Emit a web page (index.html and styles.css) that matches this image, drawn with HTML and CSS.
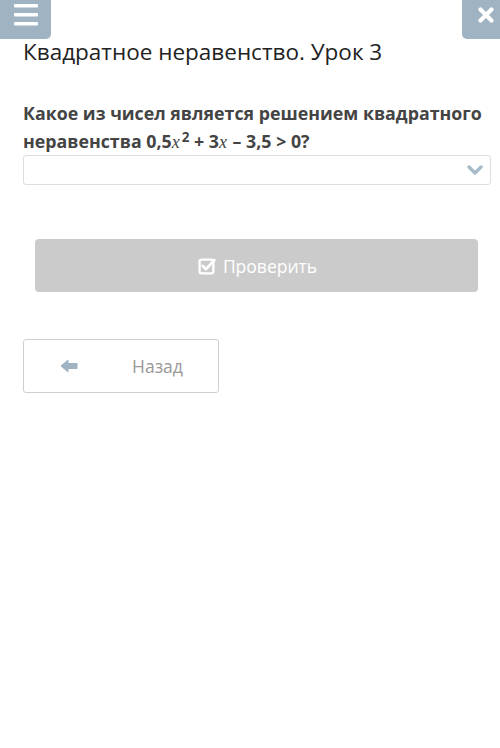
FILE: index.html
```html
<!DOCTYPE html>
<html lang="ru">
<head>
<meta charset="utf-8">
<title>Квадратное неравенство. Урок 3</title>
<link rel="stylesheet" href="styles.css">
</head>
<body>
<div class="topbar">
  <button class="corner-btn menu-btn" aria-label="Меню">
    <svg width="24" height="22" viewBox="0 0 24 22"><rect x="0" y="0" width="24" height="3.4" rx="1" fill="#fff"/><rect x="0" y="9" width="24" height="3.4" rx="1" fill="#fff"/><rect x="0" y="18" width="24" height="3.4" rx="1" fill="#fff"/></svg>
  </button>
  <button class="corner-btn close-btn" aria-label="Закрыть">
    <svg width="16" height="16" viewBox="0 0 16 16"><path d="M2.5 2.5 L13.5 13.5 M13.5 2.5 L2.5 13.5" stroke="#fff" stroke-width="4.2" stroke-linecap="round"/></svg>
  </button>
</div>
<main class="content">
  <h1 class="title">Квадратное неравенство. Урок 3</h1>
  <p class="question">Какое из чисел является решением квадратного неравенства 0,5<span class="var">x</span><sup>2</sup>&nbsp;+ 3<span class="var">x</span> – 3,5 &gt; 0?</p>
  <div class="select">
    <svg class="chev" width="16" height="12" viewBox="0 0 16 12"><path d="M2 3 L8 9 L14 3" fill="none" stroke="#a7bccb" stroke-width="3.4" stroke-linecap="round" stroke-linejoin="round"/></svg>
  </div>
  <div class="check-row">
    <button class="check-btn">
      <svg width="18" height="18" viewBox="0 0 17 17"><rect x="1.5" y="2.5" width="13" height="13" rx="2" fill="none" stroke="#fff" stroke-width="2.2"/><path d="M4.5 8.5 L7.5 11.5 L15.5 3" fill="none" stroke="#fff" stroke-width="2.6" stroke-linecap="round" stroke-linejoin="round"/></svg>
      <span>Проверить</span>
    </button>
  </div>
  <button class="back-btn">
    <svg class="arrow" width="18" height="14" viewBox="0 0 18 14"><path d="M1 7 L8 1 L8 4.5 L17 4.5 L17 9.5 L8 9.5 L8 13 Z" fill="#9fb3c3" stroke="#9fb3c3" stroke-width="1" stroke-linejoin="round"/></svg>
    <span>Назад</span>
  </button>
</main>
</body>
</html>
```

FILE: styles.css
```css
* { box-sizing: border-box; }

body {
  margin: 0;
  background: #fff;
  font-family: "Open Sans", "Liberation Sans", sans-serif;
  color: #222;
}

.topbar {
  display: flex;
  justify-content: space-between;
  height: 0;
}

.corner-btn {
  border: none;
  padding: 0;
  height: 39px;
  background: #a0b3c3;
  display: flex;
}

.menu-btn {
  width: 51px;
  border-radius: 0 0 5px 0;
  align-items: flex-start;
  justify-content: center;
  padding-top: 4px;
  padding-left: 1px;
}

.close-btn {
  width: 38px;
  border-radius: 0 0 0 5px;
  align-items: flex-start;
  justify-content: flex-end;
  padding-top: 7px;
  padding-right: 6px;
}

.content {
  padding: 37px 9px 0 23px;
}

.title {
  margin: 0;
  font-size: 22.5px;
  font-weight: 400;
  line-height: 30px;
  color: #222;
}

.question {
  margin: 32px 0 0;
  font-size: 17.8px;
  font-weight: 700;
  line-height: 28px;
  color: #444;
}

/* math variable set in a serif italic */
.var {
  font-family: "Liberation Serif", serif;
  font-style: italic;
  font-weight: 400;
  font-size: 18px;
  line-height: 1;
  padding-right: 1px;
}

.question sup {
  font-size: 13.5px;
  line-height: 1;
  vertical-align: 0.45em;
  margin-left: 1px;
}

.select {
  height: 30px;
  border: 1px solid #dedede;
  border-radius: 3px;
  display: flex;
  align-items: center;
  justify-content: flex-end;
  padding-right: 7px;
}

.check-row {
  padding: 54px 13px 0 12px;
}

.check-btn {
  width: 100%;
  height: 53px;
  border: none;
  border-radius: 4px;
  background: #cbcbcb;
  color: #fff;
  font-family: inherit;
  font-size: 17.5px;
  display: flex;
  align-items: center;
  justify-content: center;
  gap: 7px;
  padding: 0 0 0 2px;
}

.back-btn {
  margin-top: 47px;
  width: 196px;
  height: 54px;
  border: 1px solid #cfcfcf;
  border-radius: 3px;
  background: #fff;
  font-family: inherit;
  font-size: 17.5px;
  color: #999;
  display: flex;
  align-items: center;
  padding: 0 0 0 36px;
}

.back-btn span { margin-left: 54px; }
```
